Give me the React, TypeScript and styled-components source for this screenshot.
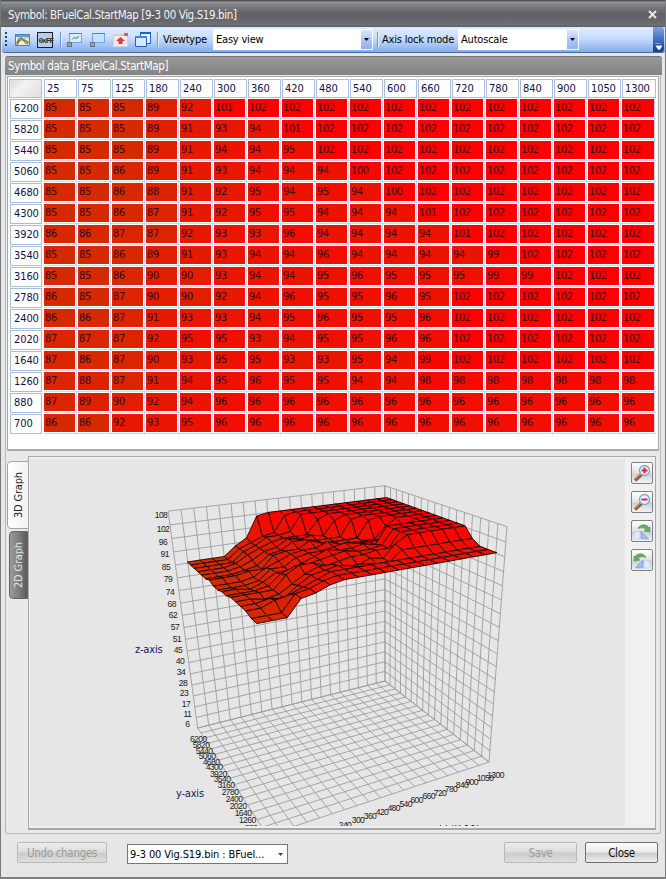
import React from "react";
import styled, { createGlobalStyle, css } from "styled-components";

const GlobalStyle = createGlobalStyle`
  * { box-sizing: border-box; }
  html, body { margin: 0; padding: 0; background: #e6e6e6; }
  body { font-family: "DejaVu Sans Condensed", "DejaVu Sans", Tahoma, sans-serif; font-stretch: condensed; font-size: 11px; color: #000; }
`;

/* ---------- data ---------- */

const loads = [25, 75, 125, 180, 240, 300, 360, 420, 480, 540, 600, 660, 720, 780, 840, 900, 1050, 1300];
const speeds = [6200, 5820, 5440, 5060, 4680, 4300, 3920, 3540, 3160, 2780, 2400, 2020, 1640, 1260, 880, 700];

/* Each row keeps its last value up to the end of the load axis. */
const fill = (...values: number[]) =>
  loads.map((_, i) => values[Math.min(i, values.length - 1)]);

const map: number[][] = [
  fill(85, 85, 85, 89, 92, 101, 102),
  fill(85, 85, 85, 89, 91, 93, 94, 101, 102),
  fill(85, 85, 85, 89, 91, 94, 94, 95, 102),
  fill(85, 85, 86, 89, 91, 93, 94, 94, 94, 100, 102),
  fill(85, 85, 86, 88, 91, 92, 95, 94, 95, 94, 100, 102),
  fill(85, 85, 86, 87, 91, 92, 95, 95, 94, 94, 94, 101, 102),
  fill(86, 86, 87, 87, 92, 93, 93, 96, 94, 94, 94, 94, 101, 102),
  fill(85, 85, 86, 89, 91, 93, 94, 94, 96, 94, 94, 94, 94, 99, 102),
  fill(85, 85, 86, 90, 90, 93, 94, 94, 95, 96, 95, 95, 95, 99, 99, 102),
  fill(86, 85, 87, 90, 90, 92, 94, 96, 95, 95, 96, 95, 102),
  fill(86, 86, 87, 91, 93, 93, 94, 95, 96, 95, 95, 96, 102),
  fill(87, 87, 87, 92, 95, 95, 93, 94, 95, 95, 96, 96, 102),
  fill(87, 86, 87, 90, 93, 95, 95, 93, 93, 95, 94, 99, 102),
  fill(87, 88, 87, 91, 94, 95, 96, 95, 95, 94, 94, 98),
  fill(87, 89, 90, 92, 94, 96),
  fill(86, 86, 92, 93, 95, 96),
];

const heat = (value: number) => {
  const red = Math.min(255, Math.round((value * 255) / 102));
  return `rgb(${red},${255 - red},0)`;
};

/* ---------- window ---------- */

const Window = styled.div`
  width: 666px;
  height: 879px;
  display: flex;
  flex-direction: column;
  overflow: hidden;
  background: #e6e6e6;
  border-left: 1px solid #77787a;
  border-right: 1px solid #77787a;
  border-bottom: 2px solid #7c7d80;
`;

const TitleBar = styled.header`
  flex: none;
  height: 27px;
  margin: 0 -1px;
  padding: 2px 9px 0 8px;
  display: flex;
  align-items: center;
  justify-content: space-between;
  color: #f4f4f4;
  font-size: 11.5px;
  letter-spacing: -0.4px;
  white-space: nowrap;
  background: linear-gradient(#4b4c51 0, #55565b 1px, #98999c 2px, #86878b 4px, #717276 9px, #606166 14px, #66676b 20px, #6f7073 25px, #515a6c 27px);
`;

const Toolbar = styled.div`
  flex: none;
  height: 26px;
  margin: 0 0 0 1px;
  padding: 0 0 0 3px;
  display: flex;
  align-items: center;
  border-bottom: 1px solid #4a6ba6;
  border-radius: 3px 0 3px 3px;
  background: linear-gradient(#dfebff, #d2e3fd 30%, #bcd5fb 55%, #94b9f2 85%, #84abe9);
`;

const Grip = styled.div`
  width: 2px;
  height: 15px;
  margin: 0 7px 0 0;
  background: repeating-linear-gradient(#27417c 0 2px, transparent 2px 4px);
`;

const ToolIcon = styled.span<{ $gap: number }>`
  width: 18px;
  height: 18px;
  margin-right: ${(p) => p.$gap}px;
  svg { display: block; }
`;

const Separator = styled.i<{ $right: number }>`
  width: 2px;
  height: 15px;
  margin-right: ${(p) => p.$right}px;
  border-left: 1px solid #6f94d0;
  border-right: 1px solid #e9f2ff;
`;

const ToolLabel = styled.span<{ $width: number }>`
  width: ${(p) => p.$width}px;
  font-size: 11px;
  letter-spacing: -0.2px;
  white-space: nowrap;
`;

const ToolCombo = styled.div<{ $width: number; $right: number }>`
  width: ${(p) => p.$width}px;
  height: 21px;
  margin-right: ${(p) => p.$right}px;
  padding-left: 3px;
  display: flex;
  align-items: center;
  justify-content: space-between;
  background: #fff;
`;

const ComboArrow = styled.span`
  width: 11px;
  height: 19px;
  margin-right: 1px;
  display: grid;
  place-items: center;
  background: linear-gradient(#dbe8ff, #a6c4f3 60%, #8fb3ec);
`;

const Overflow = styled.span`
  width: 11px;
  height: 25px;
  margin-left: auto;
  margin-right: 1px;
  display: flex;
  align-items: flex-end;
  justify-content: center;
  padding-bottom: 2px;
  border-radius: 0 3px 3px 0;
  background: linear-gradient(#7ba4e4, #456fbf 50%, #14398f);
`;

const PanelHead = styled.div`
  flex: none;
  height: 19px;
  margin: 3px 3px 0 4px;
  padding: 0 3px;
  line-height: 19px;
  color: #fff;
  font-size: 11.5px;
  letter-spacing: -0.37px;
  border-radius: 3px 3px 0 0;
  border-top: 1px solid #737373;
  background: linear-gradient(#9a9a9a, #8a8a8a 60%, #848484);
`;

const PanelBody = styled.section`
  flex: none;
  height: 759px;
  margin: 0 4px 0 4px;
  padding: 1px 1px 4px;
  border: 1px solid #b9b9b9;
  border-top: 0;
  border-radius: 0 0 3px 3px;
  background: #e9e9e9;
`;

/* ---------- table ---------- */

const TableFrame = styled.div`
  width: 652px;
  height: 375px;
  padding: 1px 0 0 1px;
  border: 1px solid #a3abab;
  border-bottom: 2px solid #aaa;
  background: #fff;
`;

const Table = styled.div`
  display: grid;
  grid-template-columns: 35px repeat(17, 34px) 35px;
  grid-template-rows: 21px repeat(16, 21px);
`;

const headBox = css`
  color: #10104e;
  border: 1px solid #a9bddc;
  background: #fff;
  letter-spacing: -0.1px;
`;

const Corner = styled.div`
  margin: 1px 2px 1px 0;
  border: 1px solid #b2c0d4;
  background: linear-gradient(135deg, #dcdcdc, #f2f2f2 40%, #dedede);
`;

const ColumnHead = styled.div`
  ${headBox}
  margin: 1px 1px 1px 0;
  padding-left: 2px;
  line-height: 18px;
`;

const RowHead = styled.div`
  ${headBox}
  margin: 0 2px 1px 1px;
  padding-left: 3px;
  line-height: 18px;
`;

const Slot = styled.div`
  padding: 0 3px 3px 0;
  background:
    linear-gradient(#cfd2f0, #cfd2f0) 32px 0 / 1px 21px no-repeat,
    linear-gradient(#dccff0, #dccff0) 0 19px / 34px 1px no-repeat;
`;

const Value = styled.div<{ $value: number }>`
  height: 18px;
  padding-left: 1px;
  line-height: 18px;
  letter-spacing: -0.4px;
  color: #3a0500;
  background: ${(p) => heat(p.$value)};
`;

/* ---------- graph ---------- */

const GraphArea = styled.div`
  display: flex;
  margin-top: 5px;
`;

const Tabs = styled.div`
  width: 21px;
  padding-top: 5px;
  display: flex;
  flex-direction: column;
  gap: 2px;
`;

const Tab = styled.div<{ $active?: boolean }>`
  width: ${(p) => (p.$active ? 22 : 19)}px;
  height: 68px;
  margin-left: ${(p) => (p.$active ? 0 : 2)}px;
  display: flex;
  align-items: center;
  justify-content: center;
  writing-mode: vertical-rl;
  transform: rotate(180deg);
  letter-spacing: -0.2px;
  border-radius: 0 4px 4px 0;
  border: 1px solid ${(p) => (p.$active ? "#a5a5a5" : "#666")};
  color: ${(p) => (p.$active ? "#222" : "#e4e4e4")};
  background: ${(p) => (p.$active ? "linear-gradient(90deg,#f3f3f3,#fff)" : "linear-gradient(90deg,#5b5b5b,#7c7c7c 45%,#9a9a9a)")};
`;

const GraphFrame = styled.div`
  width: 628px;
  height: 374px;
  padding: 2px 2px 2px 1px;
  display: flex;
  justify-content: space-between;
  border: 1px solid #a9a9a9;
  border-bottom: 2px solid #a6a6a6;
  background: #f0f0f0;
`;

const Plot = styled.svg`
  width: 595px;
  height: 367px;
  display: block;
  background: #e6e6e6;
`;

const SideButtons = styled.div`
  width: 22px;
  padding-top: 3px;
  display: flex;
  flex-direction: column;
  gap: 7px;
`;

const SideButton = styled.button`
  width: 22px;
  height: 22px;
  padding: 1px;
  border: 1px solid #7e8288;
  border-radius: 2px;
  background: linear-gradient(#fff, #e2e2e2 50%, #cfcfcf 55%, #f2f2f2);
  svg { display: block; }
`;

/* ---------- footer ---------- */

const Footer = styled.footer`
  flex: 1;
  padding: 8px 7px 0 16px;
  display: flex;
  align-items: flex-start;
`;

const Button = styled.button<{ $width: number; $muted?: boolean }>`
  width: ${(p) => p.$width}px;
  height: 21px;
  margin-left: ${(p) => (p.$muted ? 0 : 8)}px;
  padding: 0;
  font: inherit;
  font-size: 11.5px;
  letter-spacing: -0.3px;
  border-radius: 2px;
  border: 1px solid ${(p) => (p.$muted ? "#bababa" : "#6f6f6f")};
  color: ${(p) => (p.$muted ? "#9b9b9b" : "#111")};
  background: ${(p) =>
    p.$muted
      ? "linear-gradient(#ececec,#dcdcdc 48%,#cbcbcb 52%,#dedede)"
      : "linear-gradient(#fdfdfd,#e9e9e9 48%,#cccccc 52%,#ededed)"};
`;

const FileCombo = styled.div`
  width: 161px;
  height: 20px;
  margin: 2px auto 0 20px;
  padding: 0 4px 0 2px;
  display: flex;
  align-items: center;
  justify-content: space-between;
  font-size: 11px;
  letter-spacing: -0.1px;
  white-space: nowrap;
  border: 1px solid #777;
  background: #fff;
`;

/* ---------- 3D projection ---------- */

type Point = [number, number];

/* u: load axis, v: speed axis (back to front), w: height; all from 0 to 1. */
const project = (u: number, v: number, w: number): Point => {
  const depth = 1 + 0.12846 * u - 0.21578 * v - 0.136 * w;
  return [
    (197.7 + 236.76 * u + 11.84 * v - 52.55 * w) / depth,
    (728 + 40.48 * u - 73.02 * v - 286.4 * w) / depth,
  ];
};

const points = (list: Point[]) => list.map(([x, y]) => `${x.toFixed(1)},${y.toFixed(1)}`).join(" ");

const U_CELLS = 19;
const V_CELLS = 17;
const W_CELLS = 18;

const range = (count: number) => Array.from({ length: count + 1 }, (_, i) => i / count);

const gridLines: Point[][] = [
  ...range(U_CELLS).flatMap((u) => [
    [project(u, 0, 0), project(u, 0, 1)],
    [project(u, 0, 0), project(u, 1, 0)],
  ]),
  ...range(V_CELLS).flatMap((v) => [
    [project(1, v, 0), project(1, v, 1)],
    [project(0, v, 0), project(1, v, 0)],
  ]),
  ...range(W_CELLS).flatMap((w) => [
    [project(0, 0, w), project(1, 0, w)],
    [project(1, 0, w), project(1, 1, w)],
  ]),
];

/* The surface repeats its first column and its last row as a border strip. */
const mesh = [...map, map[map.length - 1]].map((row) => [row[0], ...row]);

const node = (row: number, col: number): Point =>
  project(0.039 + 0.0524 * col, 0.055 + 0.0573 * row, mesh[row][col] / 106.6);

/* Quads in painter's order: from the far corner towards the viewer. */
const quads = mesh.slice(1).flatMap((line, row) =>
  line.slice(1).map((_, k) => {
    const col = line.length - 2 - k;
    const mean = (mesh[row][col] + mesh[row][col + 1] + mesh[row + 1][col] + mesh[row + 1][col + 1]) / 4;
    return {
      key: `${row}-${col}`,
      color: heat(mean),
      shape: points([node(row, col), node(row, col + 1), node(row + 1, col + 1), node(row + 1, col)]),
    };
  })
);

type Tick = [string | number, number, number];

const zTicks: Tick[] = [
  [108, 161, 515.3], [102, 163, 529], [96, 163, 542], [91, 164.7, 554], [85, 166, 567], [79, 168, 579],
  [74, 170, 591.7], [68, 171.7, 604], [62, 173, 615], [57, 175, 627], [51, 177, 639], [45, 178, 650],
  [40, 180, 661.3], [34, 181, 672.3], [28, 183, 683], [23, 184, 693.3], [17, 186, 704.3], [11, 187.3, 714], [6, 187.3, 724],
];
const yTicks: Tick[] = [
  [6200, 198.3, 739], [5820, 201, 745.3], [5440, 204, 750.5], [5060, 207, 755.7], [4680, 211, 761.7],
  [4300, 214, 767.3], [3920, 218.3, 773.7], [3540, 222, 779.3], [3160, 226, 785.3], [2780, 230, 792.3],
  [2400, 234, 799.3], [2020, 238, 806.3], [1640, 243, 813.3], [1260, 247.3, 820.3], [880, 251, 828],
];
const xTicks: Tick[] = [
  [1300, 495.5, 775.3], [1050, 485, 777.7], [900, 471.7, 782.3], [840, 462, 785.3], [780, 451, 789],
  [720, 440, 793], [660, 428.7, 796], [600, 416.7, 800], [540, 405.7, 804], [480, 393.7, 808],
  [420, 382, 812], [360, 370, 815.7], [300, 358, 820], [240, 345, 824.7], [180, 333, 829],
];

const TickText = styled.text`
  font-family: "Liberation Sans", Arial, sans-serif;
  font-size: 8.6px;
  letter-spacing: -0.6px;
  text-anchor: middle;
  fill: #1c1c1c;
`;

const AxisText = styled.text`
  font-size: 11px;
  letter-spacing: -0.2px;
  fill: #15155e;
`;

const Surface = () => (
  <Plot viewBox="30 459 595 367">
    <g stroke="#9d9d9d" strokeWidth="0.9" fill="none">
      {gridLines.map((line, i) => (
        <polyline key={i} points={points(line)} />
      ))}
    </g>
    <g stroke="#1a0000" strokeWidth="0.9" strokeLinejoin="round">
      {quads.map((q) => (
        <polygon key={q.key} points={q.shape} fill={q.color} />
      ))}
    </g>
    {[...zTicks, ...yTicks, ...xTicks].map(([label, x, y]) => (
      <TickText key={`${label}-${x}`} x={x} y={y + 3}>{label}</TickText>
    ))}
    <AxisText x="135" y="653">z-axis</AxisText>
    <AxisText x="176" y="797">y-axis</AxisText>
    <AxisText x="439" y="833">bi (X 10)</AxisText>
  </Plot>
);

/* ---------- icons ---------- */

const Arrow = ({ color = "#000" }: { color?: string }) => (
  <svg width="5" height="3"><path d="M0 0h5L2.5 3z" fill={color} /></svg>
);

const ChartIcon = () => (
  <svg width="18" height="18">
    <rect x="1.5" y="3.5" width="14" height="11" fill="#e8f1ee" stroke="#4f7fb6" />
    <path d="M2 4h13v2H2z" fill="#5b9be0" />
    <path d="M3 13C4 7 7 6 9 8s4 1 5.500 4" fill="none" stroke="#5d9b51" strokeWidth="1.600" />
    <path d="M3 14c2-5 5-7 7-4s2 2 4 3" fill="none" stroke="#b0562c" strokeWidth="1.200" />
    <path d="M9 8l4-2 2 2" fill="none" stroke="#e8b04a" />
  </svg>
);

const HexText = styled.text`
  font: bold 8px "Liberation Mono", monospace;
  letter-spacing: -1.2px;
  fill: #333;
`;

const HexIcon = () => (
  <svg width="18" height="18">
    <rect x="0.500" y="1.500" width="15" height="15" fill="#b9cdea" stroke="#17202e" />
    <HexText x="1.500" y="12">0xFF</HexText>
  </svg>
);

const WindowIcon = ({ chart }: { chart?: boolean }) => (
  <svg width="18" height="18">
    <rect x="3.500" y="2.500" width="12" height="9" fill={chart ? "#d9ecfa" : "#c2e2fb"} stroke="#6ea5e2" />
    <path d="M3 2.500h13" stroke="#4287dc" />
    {chart && <path d="M6 8.500l2-2 2 1 3-2" fill="none" stroke="#477" />}
    <rect x="1.500" y="11.500" width="4" height="4" fill="#9aa3ad" stroke="#66717d" />
  </svg>
);

const ExportIcon = () => (
  <svg width="18" height="18">
    <rect x="1.500" y="3.500" width="14" height="12" fill="#efeaf2" stroke="#d8ccd8" />
    <path d="M1 3h11v2H1z" fill="#dfcdd2" />
    <path d="M12 2h4v3h-4z" fill="#e65a4e" />
    <path d="M8.500 6L13 10h-2.500v3h-4v-3H4z" fill="#dc3a34" />
  </svg>
);

const CascadeIcon = () => (
  <svg width="18" height="18">
    <path d="M5.500 1.500h10v11h-10z" fill="#eaf4ff" stroke="#1c62c8" />
    <path d="M5 2h11" stroke="#1c62c8" strokeWidth="2" />
    <path d="M.5 5.500h11v10H.5z" fill="#d4e9fd" stroke="#1c62c8" />
    <path d="M0 6h12" stroke="#3d87e6" strokeWidth="2" />
  </svg>
);

const ZoomIcon = ({ plus }: { plus?: boolean }) => (
  <svg width="18" height="18">
    <path d="M2 16.500L9 10" stroke="#96592d" strokeWidth="3.200" />
    <path d="M2.500 15L8 10" stroke="#d29a67" strokeWidth="1" />
    <circle cx="11.500" cy="6.500" r="5" fill="#e5f6ff" stroke="#78a9cf" strokeWidth="1.300" />
    <path d="M8.500 6.500h6" stroke="#ed2020" strokeWidth="2" />
    {plus && <path d="M11.500 3.500v6" stroke="#ed2020" strokeWidth="2" />}
  </svg>
);

const RotateIcon = ({ left }: { left?: boolean }) => (
  <svg width="18" height="18">
    <g transform={left ? "matrix(-1 0 0 1 18 0)" : undefined}>
      <path d="M1 17V11l6-2.500V17z" fill="#e1ebfa" stroke="#b3c6e2" strokeWidth=".6" />
      <path d="M8 17V9l8 8z" fill="#9bbcf0" stroke="#7c9cd6" strokeWidth=".6" />
      <path d="M5 6.500C7 2 13 1.500 16 5.500l1-.5v5l-6-1 2-1.500C11 5.500 8 5.500 5 6.500z" fill="#6aa868" stroke="#548f54" strokeWidth=".6" />
    </g>
  </svg>
);

/* ---------- page ---------- */

export default function App() {
  return (
    <>
      <GlobalStyle />
      <Window>
        <TitleBar>
          <span>Symbol: BFuelCal.StartMap [9-3 00 Vig.S19.bin]</span>
          <svg width="9" height="9"><path d="M1 1l7 7M8 1L1 8" stroke="#e8e8e8" strokeWidth="2" /></svg>
        </TitleBar>
        <Toolbar>
          <Grip />
          <ToolIcon $gap={5}><ChartIcon /></ToolIcon>
          <ToolIcon $gap={5}><HexIcon /></ToolIcon>
          <Separator $right={4} />
          <ToolIcon $gap={5}><WindowIcon chart /></ToolIcon>
          <ToolIcon $gap={5}><WindowIcon /></ToolIcon>
          <ToolIcon $gap={5}><ExportIcon /></ToolIcon>
          <ToolIcon $gap={4}><CascadeIcon /></ToolIcon>
          <Separator $right={4} />
          <ToolLabel $width={50}>Viewtype</ToolLabel>
          <ToolCombo $width={160} $right={4}>
            <ToolLabel $width={100}>Easy view</ToolLabel>
            <ComboArrow><Arrow /></ComboArrow>
          </ToolCombo>
          <Separator $right={3} />
          <ToolLabel $width={76}>Axis lock mode</ToolLabel>
          <ToolCombo $width={121} $right={0}>
            <ToolLabel $width={80}>Autoscale</ToolLabel>
            <ComboArrow><Arrow /></ComboArrow>
          </ToolCombo>
          <Overflow>
            <svg width="7" height="7"><path d="M0 0h6M1 3h6L4 7z" fill="#fff" stroke="#fff" strokeWidth=".8" /></svg>
          </Overflow>
        </Toolbar>
        <PanelHead>Symbol data [BFuelCal.StartMap]</PanelHead>
        <PanelBody>
          <TableFrame>
            <Table>
              <Corner />
              {loads.map((load) => <ColumnHead key={load}>{load}</ColumnHead>)}
              {speeds.map((speed, row) => (
                <React.Fragment key={speed}>
                  <RowHead>{speed}</RowHead>
                  {map[row].map((value, col) => (
                    <Slot key={col}><Value $value={value}>{value}</Value></Slot>
                  ))}
                </React.Fragment>
              ))}
            </Table>
          </TableFrame>
          <GraphArea>
            <Tabs>
              <Tab $active>3D Graph</Tab>
              <Tab>2D Graph</Tab>
            </Tabs>
            <GraphFrame>
              <Surface />
              <SideButtons>
                <SideButton><ZoomIcon plus /></SideButton>
                <SideButton><ZoomIcon /></SideButton>
                <SideButton><RotateIcon /></SideButton>
                <SideButton><RotateIcon left /></SideButton>
              </SideButtons>
            </GraphFrame>
          </GraphArea>
        </PanelBody>
        <Footer>
          <Button $width={90} $muted>Undo changes</Button>
          <FileCombo>
            <span>9-3 00 Vig.S19.bin : BFuel...</span>
            <Arrow color="#444" />
          </FileCombo>
          <Button $width={73} $muted>Save</Button>
          <Button $width={73}>Close</Button>
        </Footer>
      </Window>
    </>
  );
}
